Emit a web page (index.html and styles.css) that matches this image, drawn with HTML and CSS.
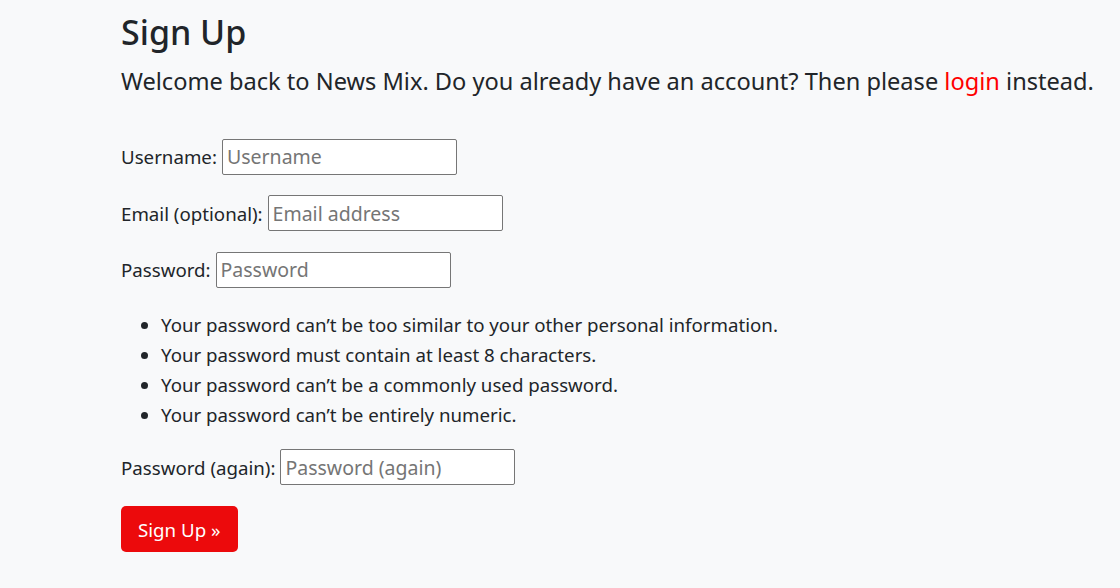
FILE: index.html
```html
<!DOCTYPE html>
<html lang="en">
<head>
<meta charset="utf-8">
<title>Sign Up</title>
<link rel="stylesheet" href="styles.css">
</head>
<body>
<main class="container">
  <h1 class="title">Sign Up</h1>
  <p class="lead">Welcome back to News Mix. Do you already have an account? Then please <a href="#" class="link">login</a> instead.</p>
  <form class="signup-form">
    <p class="field"><label for="u">Username:</label><input id="u" class="input" type="text" placeholder="Username"></p>
    <p class="field"><label for="e">Email (optional):</label><input id="e" class="input" type="email" placeholder="Email address"></p>
    <p class="field"><label for="p1">Password:</label><input id="p1" class="input" type="password" placeholder="Password"></p>
    <ul class="help">
      <li>Your password can’t be too similar to your other personal information.</li>
      <li>Your password must contain at least 8 characters.</li>
      <li>Your password can’t be a commonly used password.</li>
      <li>Your password can’t be entirely numeric.</li>
    </ul>
    <p class="field"><label for="p2">Password (again):</label><input id="p2" class="input" type="password" placeholder="Password (again)"></p>
    <button type="submit" class="btn">Sign Up »</button>
  </form>
</main>
</body>
</html>
```

FILE: styles.css
```css
html, body {
  margin: 0;
  padding: 0;
}
body {
  background: #f8f9fa;
  color: #212529;
  font-family: "Noto Sans", "Open Sans", sans-serif;
  font-size: 18.7px;
  line-height: 30px;
}
.container {
  padding: 11px 0 0 121px;
}
.title {
  margin: 0 0 10px;
  font-size: 34px;
  line-height: 42px;
  font-weight: 500;
}
.lead {
  margin: 0 0 38px;
  font-size: 23.6px;
  line-height: 37.5px;
  white-space: nowrap;
}
.link {
  color: #ff0000;
  text-decoration: none;
}
.signup-form {
  margin: 0;
}
.field {
  display: flex;
  align-items: center;
  gap: 5px;
  margin: 0 0 20.5px;
  height: 36px;
}
.field label {
  padding-top: 1px;
}
.input {
  box-sizing: border-box;
  width: 235px;
  height: 36px;
  padding: 0 4px;
  border: 1px solid #767676;
  border-radius: 2px;
  background: #fff;
  font-family: inherit;
  font-size: 19.5px;
  color: #212529;
}
.input::placeholder {
  color: #757575;
}
.help {
  margin: 0 0 19px;
  padding: 2px 0 0 40px;
}
.btn {
  box-sizing: border-box;
  height: 46px;
  padding: 1px 17px 0;
  border: none;
  border-radius: 5px;
  background: #ec0a0c;
  color: #fff;
  font-family: inherit;
  font-size: 18.7px;
  cursor: pointer;
}
```
